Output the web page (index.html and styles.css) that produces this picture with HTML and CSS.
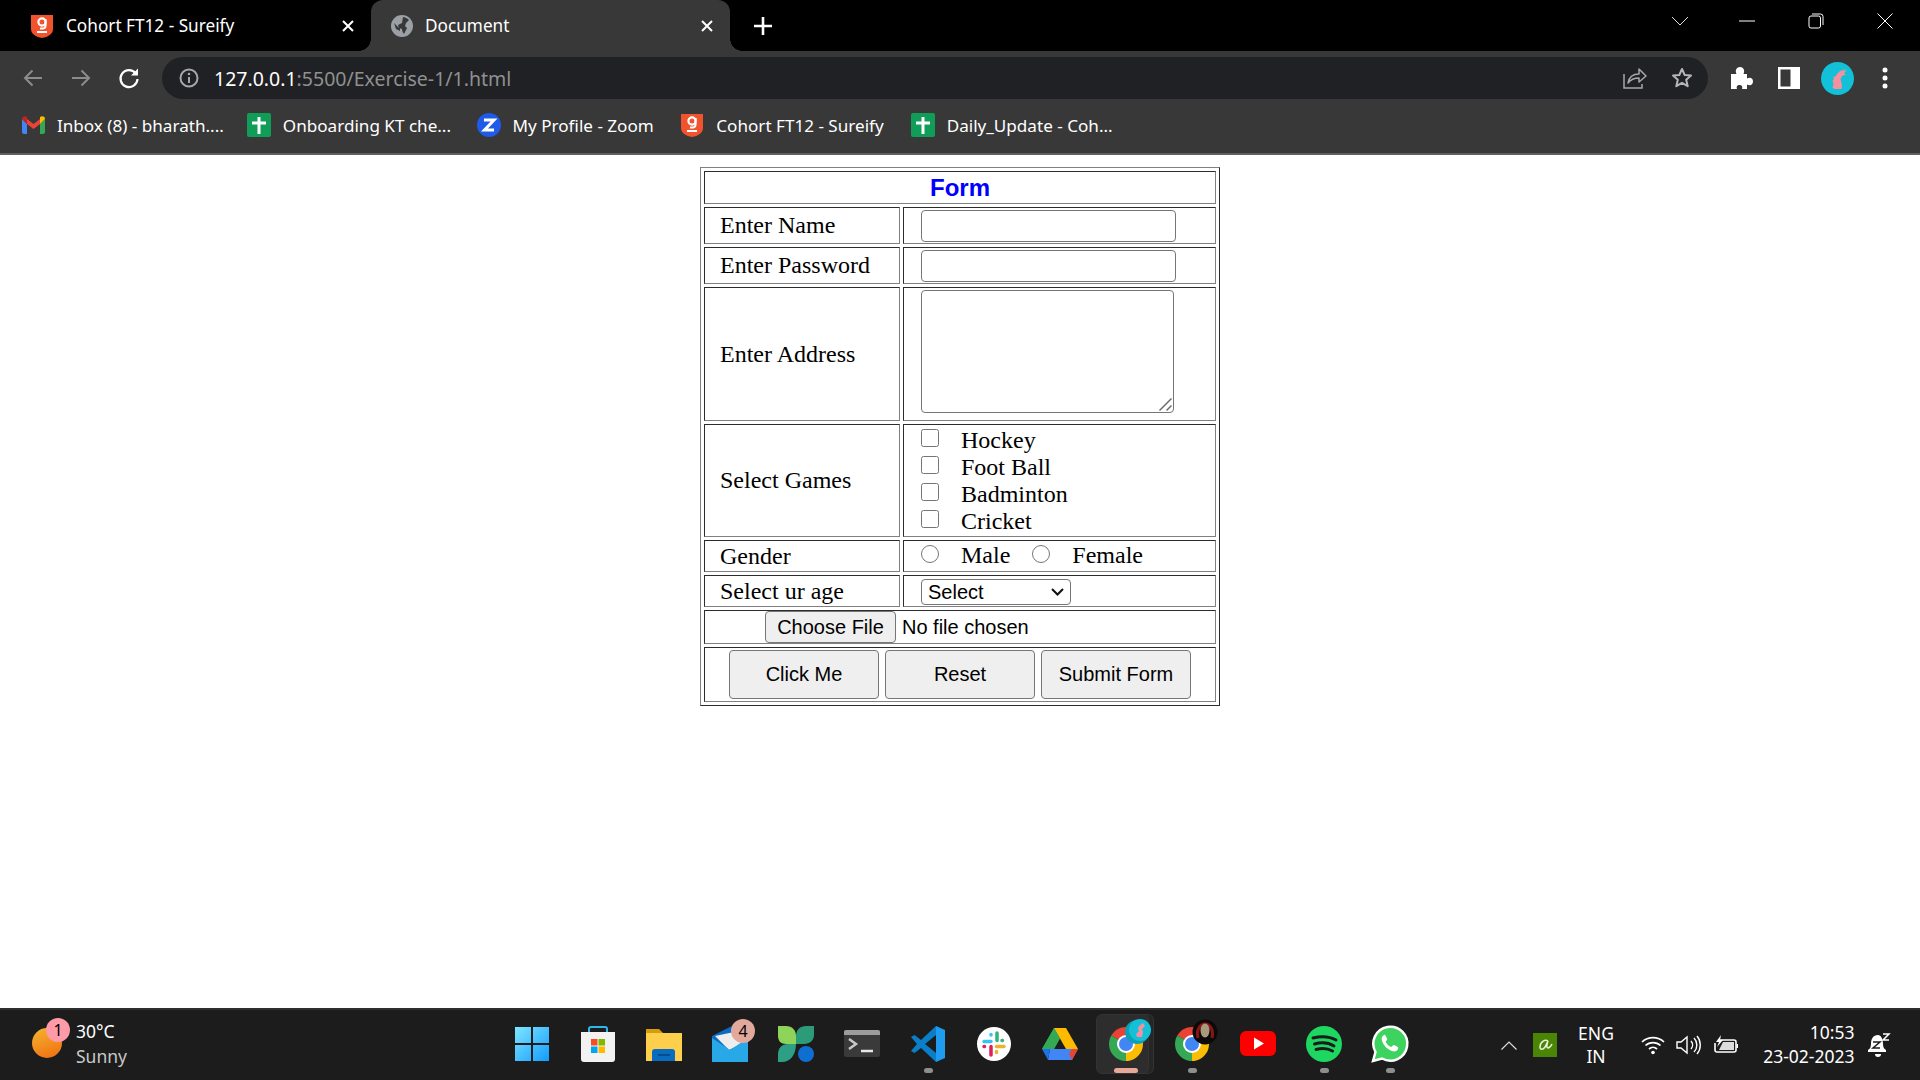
FILE: index.html
```html
<!DOCTYPE html>
<html lang="en">
<head>
<meta charset="utf-8">
<title>Document</title>
<link rel="stylesheet" href="styles.css">
</head>
<body>
<header class="browser">
  <div class="tabstrip">
    <div class="tab">
      <svg width="24" height="24" viewBox="0 0 24 24"><path d="M1 1h22v14c0 5-5 8-11 9C6 23 1 20 1 15z" fill="#f0532d"/><circle cx="12" cy="8" r="3.6" fill="none" stroke="#fff" stroke-width="2.2"/><path d="M15.6 5v6.5c0 2.6-1.800 3.300-5.600 3" fill="none" stroke="#fff" stroke-width="2"/><path d="M7 18h10" stroke="#fff" stroke-width="2"/></svg>
      <span class="tab-title">Cohort FT12 - Sureify</span>
      <svg class="tab-close" width="14" height="14" viewBox="0 0 14 14"><path d="M2 2l10 10M12 2L2 12" stroke="#fff" stroke-width="2"/></svg>
    </div>
    <div class="tab tab-active">
      <svg width="22" height="22" viewBox="0 0 22 22"><circle cx="11" cy="11" r="11" fill="#9aa0a6"/><path d="M12 2c3 .5 5 2 6 3l-3 3-1 3 2 2-3 6c-1-1-2-3-2-5l-3-1-1-3 4-2z" fill="#383838"/><path d="M3 8l4 4 2 1v3L5 14z" fill="#383838"/></svg>
      <span class="tab-title">Document</span>
      <svg class="tab-close" width="14" height="14" viewBox="0 0 14 14"><path d="M2 2l10 10M12 2L2 12" stroke="#fff" stroke-width="2"/></svg>
    </div>
    <svg class="newtab" width="20" height="20" viewBox="0 0 20 20"><path d="M10 1v18M1 10h18" stroke="#fff" stroke-width="2.6"/></svg>
    <div class="winctl">
      <svg width="18" height="10" viewBox="0 0 18 10"><path d="M1 1l8 8 8-8" fill="none" stroke="#ddd" stroke-width="1"/></svg>
      <svg class="win-min" width="16" height="2" viewBox="0 0 16 2"><path d="M0 1h16" stroke="#fff" stroke-width="1"/></svg>
      <svg class="win-max" width="16" height="16" viewBox="0 0 16 16"><rect x="1" y="3" width="11.500" height="12" rx="2" fill="none" stroke="#fff"/><path d="M4 1h8.500A2.500 2.500 0 0 1 15 3.500V12" fill="none" stroke="#fff"/></svg>
      <svg class="win-close" width="16" height="16" viewBox="0 0 16 16"><path d="M.5.5l15 15M15.500.5l-15 15" stroke="#fff" stroke-width="1"/></svg>
    </div>
  </div>
  <div class="toolbar">
    <svg class="nav-back" width="20" height="20" viewBox="0 0 20 20"><path d="M19 10H2M9.500 2.500L2 10l7.500 7.500" fill="none" stroke="#8b8c8e" stroke-width="2"/></svg>
    <svg class="nav-fwd" width="20" height="20" viewBox="0 0 20 20"><path d="M1 10h17M10.500 2.500L18 10l-7.500 7.500" fill="none" stroke="#8b8c8e" stroke-width="2"/></svg>
    <svg class="nav-reload" width="22" height="22" viewBox="0 0 22 22"><path d="M17.800 6.500A8.500 8.500 0 1 0 19.500 12" fill="none" stroke="#fff" stroke-width="2.200"/><path d="M20 1.500v7h-7z" fill="#fff"/></svg>
    <div class="omnibox">
      <svg width="20" height="20" viewBox="0 0 20 20"><circle cx="10" cy="10" r="8.500" fill="none" stroke="#a5a7a9" stroke-width="2"/><path d="M10 9v6" stroke="#a5a7a9" stroke-width="2"/><circle cx="10" cy="6" r="1.300" fill="#a5a7a9"/></svg>
      <span class="url"><span class="url-host">127.0.0.1</span>:5500/Exercise-1/1.html</span>
      <svg class="omni-share" width="24" height="22" viewBox="0 0 24 22"><path d="M1 7v14h18v-4" fill="none" stroke="#a5a7a9" stroke-width="1.500"/><path d="M5 16c1-6 5-9 11-9V2l7 7-7 6v-4c-5 0-8 1-11 5z" fill="none" stroke="#a5a7a9" stroke-width="1.500" stroke-linejoin="round"/></svg>
      <svg class="omni-star" width="22" height="22" viewBox="0 0 22 22"><path d="M11 2l2.700 6 6.300.6-4.800 4.200 1.500 6.400L11 15.800 5.300 19.200l1.500-6.400L2 8.600 8.300 8z" fill="none" stroke="#b5b6b8" stroke-width="2" stroke-linejoin="round"/></svg>
    </div>
    <svg class="tb-puzzle" width="22" height="22" viewBox="0 0 22 22"><path d="M0 7h5.500C4 4 5 0 9 0s5 4 3.500 7H16v4.500c3-1.500 6-.5 6 3s-3 4.500-6 3V22h-5c1-2.500-.5-4-2.500-4S5 19.500 6 22H0z" fill="#fff"/></svg>
    <svg class="tb-panel" width="22" height="22" viewBox="0 0 22 22"><rect width="22" height="22" fill="#fff"/><rect x="2.500" y="2.500" width="10" height="17" fill="#383838"/></svg>
    <svg class="tb-avatar" width="33" height="33" viewBox="0 0 33 33"><circle cx="16.500" cy="16.500" r="16.500" fill="#12c0d8"/><path d="M25 7l-6 2-3 3-1.500 2.500-2.500.5 1 2-1.500 2 1 3-1 4 2.500 1h6.500l.5-4-1.500-6 1.500-3 4-1.500-2-1 3-3.500-4 1.500z" fill="#f3929e"/></svg>
    <svg class="tb-menu" width="6" height="22" viewBox="0 0 6 22"><circle cx="3" cy="3" r="2.500" fill="#fff"/><circle cx="3" cy="11" r="2.500" fill="#fff"/><circle cx="3" cy="19" r="2.500" fill="#fff"/></svg>
  </div>
  <nav class="bookmarks">
    <a class="bm bm-1"><svg width="23" height="18" viewBox="0 0 23 18"><path d="M0 3v13a2 2 0 0 0 2 2h3V8z" fill="#4285f4"/><path d="M23 3v13a2 2 0 0 1-2 2h-3V8z" fill="#34a853"/><path d="M5 8v-5L11.500 8 18 3v5l-6.500 5z" fill="#ea4335"/><path d="M0 3c0-3 3-3.500 5-2v7z" fill="#c5221f"/><path d="M23 3c0-3-3-3.500-5-2v7z" fill="#fbbc04"/></svg>Inbox (8) - bharath....</a>
    <a class="bm bm-2"><svg width="24" height="24" viewBox="0 0 24 24"><rect width="24" height="24" rx="2" fill="#0f9d58"/><path d="M12 4v17M5 10h14" stroke="#fff" stroke-width="3"/></svg>Onboarding KT che...</a>
    <a class="bm bm-3"><svg width="24" height="24" viewBox="0 0 24 24"><circle cx="12" cy="12" r="12" fill="#1f5be8"/><path d="M7 7h10L7.500 17H17" fill="none" stroke="#fff" stroke-width="3"/></svg>My Profile - Zoom</a>
    <a class="bm bm-4"><svg width="24" height="24" viewBox="0 0 24 24"><path d="M1 1h22v14c0 5-5 8-11 9C6 23 1 20 1 15z" fill="#f0532d"/><circle cx="12" cy="8" r="3.600" fill="none" stroke="#fff" stroke-width="2.200"/><path d="M15.600 5v6.500c0 2.600-1.800 3.300-5.600 3" fill="none" stroke="#fff" stroke-width="2"/><path d="M7 18h10" stroke="#fff" stroke-width="2"/></svg>Cohort FT12 - Sureify</a>
    <a class="bm bm-5"><svg width="24" height="24" viewBox="0 0 24 24"><rect width="24" height="24" rx="2" fill="#0f9d58"/><path d="M12 4v17M5 10h14" stroke="#fff" stroke-width="3"/></svg>Daily_Update - Coh...</a>
  </nav>
</header>

<main class="page">
  <form class="form-wrap">
    <table class="form-table">
      <colgroup><col class="col-label"><col class="col-field"></colgroup>
      <tr class="r-title"><th colspan="2">Form</th></tr>
      <tr class="r-input"><td>Enter Name</td><td class="field"><input class="text" type="text"></td></tr>
      <tr class="r-input"><td>Enter Password</td><td class="field"><input class="text" type="password"></td></tr>
      <tr class="r-area"><td>Enter Address</td><td class="field"><div class="area-wrap"><textarea class="area"></textarea><svg class="grip" width="13" height="13" viewBox="0 0 13 13"><path d="M.5 12.500L12.500.5M7.500 12.500l5-5" stroke="#6e6e6e" stroke-width="1.500"/></svg></div></td></tr>
      <tr class="r-games"><td>Select Games</td><td class="field">
        <label class="opt"><input type="checkbox">Hockey</label>
        <label class="opt"><input type="checkbox">Foot Ball</label>
        <label class="opt"><input type="checkbox">Badminton</label>
        <label class="opt"><input type="checkbox">Cricket</label>
      </td></tr>
      <tr class="r-small"><td>Gender</td><td class="field"><div class="genders">
        <label class="opt"><input type="radio" name="g">Male</label>
        <label class="opt"><input type="radio" name="g">Female</label>
      </div></td></tr>
      <tr class="r-small"><td>Select ur age</td><td class="field"><div class="age-wrap"><select class="age"><option>Select</option></select><svg class="age-arrow" width="13" height="8" viewBox="0 0 13 8"><path d="M1 1l5.500 5.500L12 1" fill="none" stroke="#111" stroke-width="2"/></svg></div></td></tr>
      <tr class="r-file"><td colspan="2" class="center"><input class="file" type="file"></td></tr>
      <tr class="r-btn"><td colspan="2" class="center"><button class="btn" type="button">Click Me</button> <button class="btn" type="reset">Reset</button> <button class="btn" type="submit">Submit Form</button></td></tr>
    </table>
  </form>
</main>

<footer class="taskbar">
  <div class="weather">
    <div class="sun"><span class="badge badge-pink">1</span></div>
    <div class="weather-text"><span>30°C</span><span class="dim">Sunny</span></div>
  </div>
  <div class="apps">
    <div class="app"><svg width="36" height="36" viewBox="0 0 36 36"><defs><linearGradient id="w" x1="0" y1="0" x2="1" y2="1"><stop offset="0" stop-color="#7fe6ff"/><stop offset="1" stop-color="#129bff"/></linearGradient></defs><path d="M1 1h16v16H1zM19 1h16v16H19zM1 19h16v16H1zM19 19h16v16H19z" fill="url(#w)"/></svg></div>
    <div class="app"><svg width="36" height="36" viewBox="0 0 36 36"><path d="M9 8V3a2 2 0 0 1 2-2h14a2 2 0 0 1 2 2v5" fill="none" stroke="#2fb6ea" stroke-width="2"/><path d="M1 6h34v27a3 3 0 0 1-3 3H4a3 3 0 0 1-3-3z" fill="#f2f2f2"/><rect x="11" y="13" width="6.500" height="6.500" fill="#f25022"/><rect x="18.500" y="13" width="6.500" height="6.500" fill="#7fba00"/><rect x="11" y="20.500" width="6.500" height="6.500" fill="#00a4ef"/><rect x="18.500" y="20.500" width="6.500" height="6.500" fill="#ffb900"/></svg></div>
    <div class="app"><svg width="36" height="36" viewBox="0 0 36 36"><path d="M0 3h13l4 4h-17z" fill="#d79c0a"/><path d="M0 7h36v28H0z" fill="#fdcf4d"/><path d="M6 35V26a3 3 0 0 1 3-3h17a3 3 0 0 1 3 3v9z" fill="#0a6cbf"/><path d="M12 29h12" stroke="#05417c" stroke-width="1.500"/></svg></div>
    <div class="app"><svg width="36" height="36" viewBox="0 0 36 36"><path d="M0 10L20 0l16 10v23H0z" fill="#0a6cc4"/><path d="M3 10l24-5 4 12-14 7z" fill="#eee"/><path d="M0 12l18 12 18-12v24H0z" fill="#29a8e8"/></svg><span class="badge badge-mail">4</span></div>
    <div class="app"><svg width="36" height="36" viewBox="0 0 36 36"><path d="M0 0h8c6 0 10 4 10 10v8H8c-5 0-8-3-8-8z" fill="#8fd45a"/><path d="M36 0h-8c-6 0-10 4-10 10v8h8c6 0 10-4 10-9z" fill="#2c9b78"/><path d="M0 36v-8c0-6 4-10 10-10h8c0 11-6 18-14 18z" fill="#2c9f84"/><circle cx="28" cy="28" r="8" fill="#0f6fd0"/></svg></div>
    <div class="app"><svg width="36" height="27" viewBox="0 0 36 27"><rect width="36" height="27" rx="2" fill="#3a3a3a"/><path d="M0 5V2a2 2 0 0 1 2-2h32a2 2 0 0 1 2 2v3z" fill="#9c9c9c"/><path d="M5 9l7 5-7 5" fill="none" stroke="#c9c9c9" stroke-width="2.500"/><path d="M17 21h12" stroke="#e8e8e8" stroke-width="2.500"/></svg></div>
    <div class="app"><svg width="36" height="36" viewBox="0 0 36 36"><path d="M26 0L11 14 4.500 9 1 11l6 7-6 7 3.500 2 6.500-5 15 14v-9l-11-9 11-9z" fill="#0a7ec8"/><path d="M26 0l9 4v28l-9 4z" fill="#1f9cf0"/></svg><i class="dot"></i></div>
    <div class="app"><svg width="36" height="36" viewBox="0 0 36 36"><circle cx="18" cy="18" r="17" fill="#fff"/><path d="M21 7v7.500M26 14.500h.5" stroke="#2eb67d" stroke-width="3.500" stroke-linecap="round"/><path d="M20.500 20.500H28M20.500 25.500v1" stroke="#ecb22e" stroke-width="3.500" stroke-linecap="round"/><path d="M15 20.500V29M8 20.500h.5" stroke="#e01e5a" stroke-width="3.500" stroke-linecap="round"/><path d="M8 15.500h7M15 8.500v.5" stroke="#36c5f0" stroke-width="3.500" stroke-linecap="round"/></svg></div>
    <div class="app"><svg width="36" height="32" viewBox="0 0 36 32"><path d="M12 0h12l-12 21H0z" fill="#1fa463"/><path d="M12 0h12l12 21H24z" fill="#ffba00"/><path d="M8 21h28l-6 11H6z" fill="#4285f4"/><path d="M0 21h8l-2 11z" fill="#1a73e8"/><path d="M12 0l6 10-6 11H0z" fill="#34a853"/><path d="M30 32l6-11h-6l-3 5z" fill="#ea4335"/></svg></div>
    <div class="app app-active"><i class="active-bg"></i><i class="active-bg active-bg2"></i>
      <svg class="overlay" width="36" height="36" viewBox="0 0 36 36"><path d="M18 18L3.300 9.500A17 17 0 0 1 32.700 9.500z" fill="#ea4335"/><path d="M18 18L32.700 9.500A17 17 0 0 1 18 35z" fill="#fbbc04"/><path d="M18 18L18 35A17 17 0 0 1 3.300 9.500z" fill="#34a853"/><circle cx="18" cy="18" r="9" fill="#fff"/><circle cx="18" cy="18" r="7" fill="#4285f4"/><circle cx="29" cy="6" r="12" fill="#0c9fb5"/><circle cx="32" cy="4" r="11" fill="#12c0d8"/><path d="M35-3l-4 3-1 3 1 2-3 3 1 3h5l1-5-1-3 3-3z" fill="#f3929e"/></svg>
      <i class="dot dot-active"></i></div>
    <div class="app"><svg class="overlay" width="36" height="36" viewBox="0 0 36 36"><path d="M18 18L3.300 9.500A17 17 0 0 1 32.700 9.500z" fill="#ea4335"/><path d="M18 18L32.700 9.500A17 17 0 0 1 18 35z" fill="#fbbc04"/><path d="M18 18L18 35A17 17 0 0 1 3.300 9.500z" fill="#34a853"/><circle cx="18" cy="18" r="9" fill="#fff"/><circle cx="18" cy="18" r="7" fill="#4285f4"/><circle cx="31" cy="6" r="12.500" fill="#0a0a0a"/><path d="M24 12c-2-8 2-14 7-14s9 6 7 14" fill="none" stroke="#8e1414" stroke-width="3"/><ellipse cx="31" cy="4.500" rx="4.500" ry="7" fill="#a89a7c"/></svg><i class="dot"></i></div>
    <div class="app"><svg width="36" height="25" viewBox="0 0 36 25"><rect width="36" height="25" rx="6" fill="#f00"/><path d="M14 6.500l10 6-10 6z" fill="#fff"/></svg></div>
    <div class="app"><svg width="36" height="36" viewBox="0 0 36 36"><circle cx="18" cy="18" r="18" fill="#1ed760"/><path d="M7 12c8-2 16-2 23 2M8.500 18c7-2 14-1.500 19.500 2M10 23.500c6-1.500 12-1 16.500 1.500" fill="none" stroke="#1c1c1c" stroke-width="3" stroke-linecap="round"/></svg><i class="dot"></i></div>
    <div class="app"><svg width="36" height="36" viewBox="0 0 36 36"><path d="M1 35l2.500-9A17 17 0 1 1 10 32.500z" fill="#3ed35f" stroke="#fff" stroke-width="2.500"/><path d="M12 9c-2 1-3 3-2 6 2 5 5 8 10 10 3 1 5 0 6-2 .5-1 0-2-1-2.500l-3-1.500c-1 0-1.500 1-2 1.500-.500.5-1 .5-2 0-2-1-3-2.500-4-4-.5-1 0-1.500.5-2s1-1 .5-2l-1.500-3c-.5-1-1-1-2-.5z" fill="#fff"/></svg><i class="dot"></i></div>
  </div>
  <div class="tray">
    <svg class="tray-chev" width="16" height="9" viewBox="0 0 16 9"><path d="M.5 8.500L8 1l7.500 7.500" fill="none" stroke="#ddd" stroke-width="1.200"/></svg>
    <svg class="tray-app" width="24" height="24" viewBox="0 0 24 24"><rect width="24" height="24" fill="#4a8505"/><path d="M15 8c-3-2-8 1-8 6 0 3 3 3 5 0l3-6c-1 3-2 7 0 7 2 0 3-2 4-4" fill="none" stroke="#e8f2d8" stroke-width="1.500"/></svg>
    <div class="lang"><span>ENG</span><span>IN</span></div>
    <svg class="tray-icon" width="24" height="20" viewBox="0 0 24 20"><path d="M1 7a16 16 0 0 1 22 0M4.500 10.500a11 11 0 0 1 15 0M8 14a6 6 0 0 1 8 0" fill="none" stroke="#fff" stroke-width="1.700"/><circle cx="12" cy="17.500" r="1.800" fill="#fff"/></svg>
    <svg class="tray-icon tray-vol" width="24" height="20" viewBox="0 0 24 20"><path d="M1 7h4l6-5v16l-6-5H1z" fill="none" stroke="#fff" stroke-width="1.400"/><path d="M15 6a6 6 0 0 1 0 8M18 3a10 10 0 0 1 0 14M21 1a14 14 0 0 1 0 18" fill="none" stroke="#fff" stroke-width="1.400"/></svg>
    <svg class="tray-icon tray-batt" width="24" height="20" viewBox="0 0 24 20"><path d="M5 5h15a2 2 0 0 1 2 2v8a2 2 0 0 1-2 2H3a2 2 0 0 1-2-2V8" fill="none" stroke="#fff" stroke-width="1.600"/><path d="M9 7h11v8H5z" fill="#ddd"/><path d="M7 0L2 7h3L3 12l6-7H6z" fill="#fff"/><rect x="22.500" y="9" width="1.500" height="4" fill="#fff"/></svg>
    <div class="clock"><span>10:53</span><span>23-02-2023</span></div>
    <svg class="tray-bell" width="22" height="24" viewBox="0 0 22 24"><path d="M10 2C5 2 3 6 3 11c0 3-1 5-3 6v2h18v-2c-2-1-3-3-3-6 0-5-2-9-5-9z" fill="#fff"/><path d="M7 21h6a3 3 0 0 1-6 0z" fill="#fff"/><path d="M5 9h7l-7 6h7" fill="none" stroke="#1c1c1c" stroke-width="1.500"/><path d="M15 1h6l-6 6h6" fill="none" stroke="#fff" stroke-width="1.500"/></svg>
  </div>
</footer>
</body>
</html>
```

FILE: styles.css
```css
* { box-sizing: border-box; }
html, body { height: 100%; }
body {
  margin: 0;
  display: flex;
  flex-direction: column;
  overflow: hidden;
  background: #fff;
  font-family: "Liberation Serif", serif;
  color: #000;
}
svg { display: block; flex: none; overflow: visible; }

/* Browser frame */
.browser { background: #383838; border-bottom: 2px solid #5f5f5f; font-family: "Noto Sans", sans-serif; color: #fff; }
.tabstrip { height: 51px; background: #000; display: flex; align-items: center; padding-left: 12px; }
.tab { position: relative; width: 359px; height: 51px; display: flex; align-items: center; padding: 0 16px 0 18px; font-size: 17.200px; }
.tab-title { margin-left: 12px; flex: 1; white-space: nowrap; }
.tab-active { background: #383838; border-radius: 12px 12px 0 0; padding-left: 20px; }
.tab-active::before, .tab-active::after { content: ""; position: absolute; bottom: 0; width: 12px; height: 12px; }
.tab-active::before { left: -12px; background: radial-gradient(circle at 0 0, #000 11.500px, #383838 12px); }
.tab-active::after { right: -12px; background: radial-gradient(circle at 100% 0, #000 11.500px, #383838 12px); }
.newtab { margin-left: 23px; }
.winctl { margin-left: auto; display: flex; align-items: center; padding-right: 27px; margin-top: -10px; }
.win-min { margin-left: 50px; }
.win-max { margin-left: 53px; }
.win-close { margin-left: 53px; }

.toolbar { height: 52px; display: flex; align-items: center; padding: 2px 32px 0 23px; }
.nav-fwd { margin-left: 28px; }
.nav-reload { margin-left: 27px; }
.omnibox { margin-left: 22px; width: 1552px; height: 42px; background: #202124; border-radius: 21px; display: flex; align-items: center; padding: 0 15.500px 0 17px; }
.url { margin-left: 15px; font-size: 19.500px; color: #909090; white-space: nowrap; }
.url-host { color: #fff; }
.omni-share { margin-left: auto; }
.omni-star { margin-left: 23.500px; }
.tb-puzzle { margin-left: 23px; }
.tb-panel { margin-left: 24.500px; }
.tb-avatar { margin-left: 21.500px; }
.tb-menu { margin-left: 28px; }

.bookmarks { height: 50px; display: flex; align-items: center; font-size: 17.100px; padding: 0 0 6px 22px; }
.bm { display: flex; align-items: center; gap: 12px; white-space: nowrap; }
.bm-2 { margin-left: 23px; }
.bm-3 { margin-left: 25.500px; }
.bm-4 { margin-left: 26.500px; }
.bm-5 { margin-left: 27px; }

/* Page */
.page { flex: 1; padding-top: 12px; }
.form-table {
  width: 520px;
  margin: 0 auto;
  table-layout: fixed;
  border: 1px outset #808080;
  border-spacing: 3px;
  font-size: 24px;
}
.col-label { width: 196px; }
.form-table th, .form-table td { border: 1px inset #808080; padding: 0 0 0 15px; }
.form-table th { padding: 0; font: bold 24px "Liberation Sans", Arial, sans-serif; color: #00f; height: 33px; }
.form-table td.field { padding-left: 17px; }
.form-table td.center { padding: 0; text-align: center; }
.r-input td { height: 37px; }
.r-area td { height: 134px; }
.r-games td { height: 113px; }
.r-small td { height: 32px; }
.r-file td { height: 33px; }
.r-btn td { height: 55px; }

.text { display: block; width: 255px; height: 32px; border: 1px solid #767676; border-radius: 4px; background: #fff; padding: 0 3px; font: 20px "Liberation Sans", Arial, sans-serif; outline: 0; }
.area-wrap { position: relative; width: 253px; padding-bottom: 5px; }
.area { display: block; width: 253px; height: 123px; border: 1px solid #767676; border-radius: 4px; background: #fff; padding: 3px; font: 20px "Liberation Mono", monospace; resize: none; }
.grip { position: absolute; right: 2px; bottom: 7px; }
.opt { display: flex; align-items: flex-start; height: 27px; line-height: 27px; white-space: nowrap; }
.opt input { flex: none; width: 18px; height: 18px; margin: 2px 22px 0 0; }
.genders { display: flex; }
.genders .opt { height: 28px; margin-right: 22px; }
.genders .opt input { margin-top: 3px; }
.age-wrap { position: relative; width: 150px; margin-top: 1px; }
.age { display: block; width: 150px; height: 26px; border: 1px solid #767676; border-radius: 4px; background: #fff; font: 20px "Liberation Sans", Arial, sans-serif; color: #000; padding: 0 0 0 6px; appearance: none; }
.age-arrow { position: absolute; right: 7px; top: 9px; pointer-events: none; }
.file { display: block; width: 390px; margin: 0 auto; font: 20px "Liberation Sans", Arial, sans-serif; }
.file::file-selector-button { width: 131px; height: 32px; margin: 0 6px 0 0; padding: 0; border: 1px solid #767676; border-radius: 4px; background: #efefef; font: 20px "Liberation Sans", Arial, sans-serif; color: #000; }
.btn { width: 150px; height: 49px; padding: 0; border: 1px solid #767676; border-radius: 4px; background: #efefef; font: 20px "Liberation Sans", Arial, sans-serif; color: #000; }

/* Taskbar */
.taskbar { height: 72px; flex: none; background: #1c1c1c; border-top: 2px solid #2f2f2f; display: flex; font-family: "Noto Sans", sans-serif; color: #fff; }
.weather { width: 499px; display: flex; align-items: center; padding-left: 32px; gap: 14px; }
.sun { position: relative; width: 30px; height: 30px; margin-top: -4px; border-radius: 50%; background: linear-gradient(160deg, #f5b52e, #ef6c12); }
.badge { position: absolute; width: 24px; height: 24px; border-radius: 50%; color: #000; font-size: 16px; line-height: 24px; text-align: center; }
.badge-pink { left: 14px; top: -10px; background: #ff9aa8; }
.weather-text { display: flex; flex-direction: column; font-size: 17.500px; line-height: 25px; margin-bottom: 3px; }
.dim { color: #c8c8c8; }
.apps { display: flex; }
.app { position: relative; width: 66px; height: 70px; padding-bottom: 3px; display: flex; align-items: center; justify-content: center; }
.overlay { position: relative; }
.badge-mail { left: 34px; top: 9px; background: #e3a89c; }
.dot { position: absolute; left: 29px; bottom: 7px; width: 9px; height: 5px; border-radius: 3px; background: #8e8e8e; }
.dot-active { left: 21px; width: 24px; background: #e6a999; }
.active-bg { position: absolute; left: 3px; top: 4px; width: 53px; height: 60px; border-radius: 6px; background: #2d2d2d; border: 1px solid #333; }
.active-bg2 { left: 8px; background: #262626; z-index: 0; }
.app-active .active-bg:first-child { z-index: 1; }
.app-active .overlay, .app-active .dot { z-index: 2; }
.tray { flex: 1; display: flex; align-items: center; padding-left: 78px; font-size: 17.500px; }
.tray-app { margin-left: 16px; }
.lang { width: 50px; margin-left: 14px; display: flex; flex-direction: column; align-items: center; line-height: 23px; }
.tray-icon { margin-left: 12px; }
.lang + .tray-icon { margin-left: 20px; }
.tray-vol { margin-left: 11px; }
.tray-batt { margin-left: 13.500px; }
.clock { width: 117px; display: flex; flex-direction: column; align-items: flex-end; line-height: 24px; margin-bottom: 3px; }
.tray-bell { margin-left: 13px; }
```
